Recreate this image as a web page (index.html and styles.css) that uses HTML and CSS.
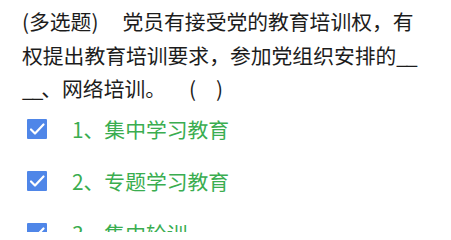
FILE: index.html
```html
<!DOCTYPE html>
<html lang="zh-CN">
<head>
<meta charset="utf-8">
<link rel="stylesheet" href="styles.css">
</head>
<body>
<div class="page">
  <p class="question">(多选题)<span class="gap"></span>党员有接受党的教育培训权，有权提出教育培训要求，参加党组织安排的<span class="under">____</span>、网络培训。<span class="gap2"></span>(<span class="blank"></span>)</p>
  <ul class="options">
    <li class="option">
      <span class="check"><svg viewBox="0 0 20 20" width="20" height="20"><path d="M4 10.5 L8 14.5 L16.5 5.5" fill="none" stroke="#fff" stroke-width="2.2" stroke-linecap="round" stroke-linejoin="round"/></svg></span>
      <span class="label">1、集中学习教育</span>
    </li>
    <li class="option">
      <span class="check"><svg viewBox="0 0 20 20" width="20" height="20"><path d="M4 10.5 L8 14.5 L16.5 5.5" fill="none" stroke="#fff" stroke-width="2.2" stroke-linecap="round" stroke-linejoin="round"/></svg></span>
      <span class="label">2、专题学习教育</span>
    </li>
    <li class="option">
      <span class="check"><svg viewBox="0 0 20 20" width="20" height="20"><path d="M4 10.5 L8 14.5 L16.5 5.5" fill="none" stroke="#fff" stroke-width="2.2" stroke-linecap="round" stroke-linejoin="round"/></svg></span>
      <span class="label">3、集中轮训</span>
    </li>
  </ul>
</div>
</body>
</html>
```
FILE: styles.css
```css
html, body {
  margin: 0;
  padding: 0;
  background: #ffffff;
}
.page {
  padding: 5px 33px 0 22px;
  font-family: "Noto Sans CJK SC", "Noto Sans", sans-serif;
  overflow: hidden;
  height: 232px;
  box-sizing: border-box;
}
.question {
  margin: 0;
  font-size: 20.8px;
  line-height: 33.5px;
  color: #1c1c1c;
  word-break: break-all;
}
.under {
  letter-spacing: -2px;
}
.gap {
  display: inline-block;
  width: 24px;
}
.gap2 {
  display: inline-block;
  width: 23px;
}
.blank {
  display: inline-block;
  width: 20px;
}
.options {
  list-style: none;
  margin: -3px 0 0 0;
  padding: 0 0 0 5px;
}
.option {
  display: flex;
  align-items: center;
  height: 52px;
}
.check {
  display: flex;
  width: 20px;
  height: 20px;
  background: #4f86e8;
  border-radius: 1px;
  margin-right: 25px;
}
.label {
  font-size: 20.8px;
  color: #3aad50;
  line-height: 30px;
}
```
